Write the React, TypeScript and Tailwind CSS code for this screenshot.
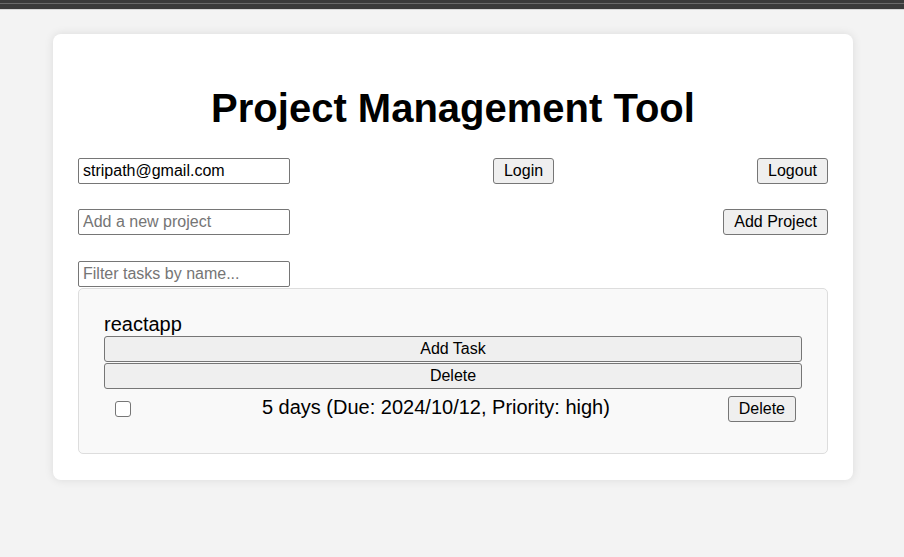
import React from "react";

const btn =
  "h-[26px] border border-[#767676] rounded-[3px] bg-[#efefef] text-[16px] text-black leading-none";

export default function App() {
  return (
    <div
      className="min-h-screen bg-[#f3f3f3] text-black"
      style={{ fontFamily: '"Liberation Sans", Arial, sans-serif' }}
    >
      <div className="h-[3px] bg-[#3a3a3a]" />
      <div className="h-[1px] bg-[#6a6a6a]" />
      <div className="h-[5px] bg-[#3a3a3a]" />
      <div className="h-[1px] bg-[#d6d6d6]" />
      <div className="pt-[24px] pl-[2px] flex justify-center">
        <div className="w-[800px] bg-white rounded-[8px] shadow-[0_0_10px_rgba(0,0,0,0.1)] px-[25px] pt-[25px] pb-[26px]">
          <h1 className="mt-[26px] text-[40px] leading-[46px] font-bold text-center">
            Project Management Tool
          </h1>
          <div className="mt-[27px] flex justify-between items-center">
            <input
              defaultValue="stripath@gmail.com"
              className="w-[212px] h-[26px] border border-[#767676] rounded-[2px] px-[4px] text-[16px] bg-white outline-none"
            />
            <button className={`${btn} px-[10px]`}>Login</button>
            <button className={`${btn} px-[10px]`}>Logout</button>
          </div>
          <div className="mt-[25px] flex justify-between items-center">
            <input
              placeholder="Add a new project"
              className="w-[212px] h-[26px] border border-[#767676] rounded-[2px] px-[4px] text-[16px] bg-white outline-none placeholder:text-[#757575]"
            />
            <button className={`${btn} px-[10px]`}>Add Project</button>
          </div>
          <div className="mt-[26px]">
            <input
              placeholder="Filter tasks by name..."
              className="block w-[212px] h-[26px] border border-[#767676] rounded-[2px] px-[4px] text-[16px] bg-white outline-none placeholder:text-[#757575]"
            />
          </div>
          <div className="mt-[1px] bg-[#f9f9f9] border border-[#dddddd] rounded-[5px] px-[25px] pt-[24px] pb-[24px]">
            <div className="text-[20px] leading-[23px]">reactapp</div>
            <button className={`${btn} block w-full`}>Add Task</button>
            <button className={`${btn} block w-full mt-[1px]`}>Delete</button>
            <div className="flex items-center pl-[11px] pr-[6px] py-[7px]">
              <input
                type="checkbox"
                className="appearance-none w-[16px] h-[16px] border-[1.5px] border-[#767676] rounded-[3px] bg-white shrink-0"
              />
              <span className="flex-1 ml-[13px] mb-[5px] text-center text-[20px] leading-[20px]">
                5 days (Due: 2024/10/12, Priority: high)
              </span>
              <button className={`${btn} px-[10px]`}>Delete</button>
            </div>
          </div>
        </div>
      </div>
    </div>
  );
}
